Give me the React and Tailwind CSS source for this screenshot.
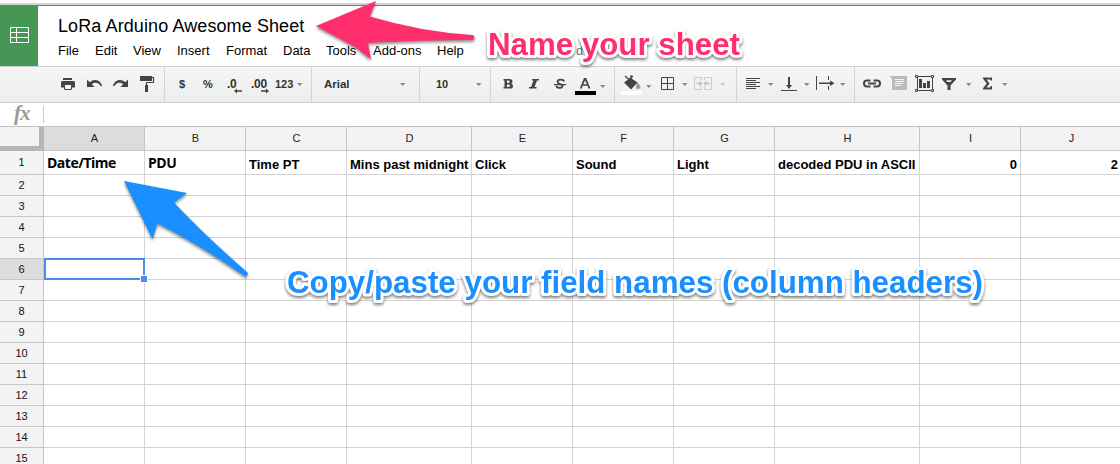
const COLS = [
  ["A", "w-[101px]", "Date/Time"],
  ["B", "w-[101px]", "PDU"],
  ["C", "w-[101px]", "Time PT"],
  ["D", "w-[125px]", "Mins past midnight"],
  ["E", "w-[101px]", "Click"],
  ["F", "w-[101px]", "Sound"],
  ["G", "w-[101px]", "Light"],
  ["H", "w-[145px]", "decoded PDU in ASCII"],
  ["I", "w-[101px]", "0"],
  ["J", "w-[101px]", "2"],
];
const ROWS = Array.from({ length: 15 }, (_, i) => i + 1);
const MENUS = [
  ["File", "w-[37px]"], ["Edit", "w-[38px]"], ["View", "w-[44px]"], ["Insert", "w-[49px]"],
  ["Format", "w-[57px]"], ["Data", "w-[43px]"], ["Tools", "w-[47px]"], ["Add-ons", "w-[64px]"], ["Help", "w-[50px]"],
];
const INK = "#444";

// Icons share the window's coordinates; each one shows the slice of the toolbar from x to x + w.
function Icon({ x, w, children }) {
  return (
    <svg className="block shrink-0" width={w} height="35" viewBox={`${x} 67 ${w} 35`} fill={INK}>
      {children}
    </svg>
  );
}

function Caret({ x, y = 83, fill = "#888" }) {
  return <path d={`M${x} ${y}h5.500l-2.750 3z`} fill={fill} />;
}

function Group({ className, children }) {
  return (
    <div className={`flex h-full shrink-0 items-center border-r border-[#d5d5d5] text-[12px] leading-[35px] font-bold text-[#333] ${className}`}>
      {children}
    </div>
  );
}

function Toolbar() {
  return (
    <div className="flex h-[37px] shrink-0 overflow-hidden border-y border-[#d0d0d0] bg-linear-to-b from-[#f6f6f6] to-[#ededed]">
      <Group className="w-[165px]">
        <Icon x={0} w={164}>
          <path d="M63 78h9v2h-9zM62.500 81h11q1.500 0 1.500 1.500v5h-3v-2h-8v2h-3v-5q0-1.500 1.500-1.500z" />
          <path d="M64.500 84.500h7v5h-7z" fill="#f6f6f6" stroke={INK} />
          <path d="M87 79.500v7.500h7.500l-2.700-2.700c4-2.700 7-1.500 9 2l1.400-.8c-2.700-6-8.200-7-12.500-3.300z" />
          <path d="M128 79.500v7.500h-7.500l2.700-2.700c-4-2.700-7-1.500-9 2l-1.400-.8c2.700-6 8.200-7 12.500-3.300z" />
          <path d="M140 76h12v5h-12z" />
          <path d="M152 77.500h1.500v5h-7v3" fill="none" stroke={INK} strokeWidth="1.200" />
          <path d="M145 85h3v7h-3z" />
        </Icon>
      </Group>
      <Group className="w-[147px]">
        <span className="w-[24px] pl-[14px] text-[11px]">$</span>
        <span className="w-[26px] pl-[14px] text-[11px]">%</span>
        <span className="w-[25px] pl-[12px] text-[12px] tracking-[-0.3px]">.0</span>
        <span className="w-[35px] pl-[11px] text-[12px] tracking-[-0.3px]">.00</span>
        <span className="w-[21px] text-[11px]">123</span>
        <Icon x={296} w={14}><Caret x={297} /></Icon>
        <span className="-ml-[145px] w-[130px]">
          <Icon x={165} w={130}>
            <path d="M234 91l3-2.500v1.700h5v1.600h-5v1.700zM269 91l-3-2.500v1.700h-5v1.600h5v1.700z" />
          </Icon>
        </span>
      </Group>
      <Group className="w-[108px]">
        <span className="w-[86px] pl-[12px] text-[11.500px]">Arial</span>
        <Icon x={398} w={20}><Caret x={400} /></Icon>
      </Group>
      <Group className="w-[71px]">
        <span className="w-[54px] pl-[16px] text-[11px]">10</span>
        <Icon x={474} w={16}><Caret x={476} /></Icon>
      </Group>
      <Group className="w-[124px]">
        <Icon x={491} w={123}>
          <path fillRule="evenodd" d="M503.500 79h6q3 0 3 2.500 0 1.300-1.300 2 1.800.6 1.800 2.400 0 2.600-3 2.600h-6.500v-1.500h1v-6.500h-1zM507 80.500v2.400h1.400q1.200 0 1.200-1.200t-1.200-1.200zM507 84.500v2.600h1.600q1.400 0 1.400-1.300t-1.400-1.300z" />
          <path d="M532 79h7v1.400h-2l-2.500 6.700h2v1.400h-7.500v-1.400h2l2.500-6.700h-1.500z" />
          <path d="M554 84h12v1.200h-12z" />
          <path d="M564 81.500c0-2.500-6.500-2.500-6.500.3 0 2.800 5.500 2 5 4.600-.4 2.300-6 1.900-6-.7" fill="none" stroke={INK} strokeWidth="1.800" />
          <path fillRule="evenodd" d="M584 78h2.200l4.200 10.500h-1.900l-1-2.700h-4.800l-1 2.700h-1.900zM585.100 80.300l-1.800 4h3.600z" />
          <path d="M575 91h21v4h-21z" fill="#000" />
          <Caret x={600} y={85} />
        </Icon>
      </Group>
      <Group className="w-[122px]">
        <Icon x={615} w={121}>
          <path d="M624 82.500l7-4.500 6.500 4.500-6.500 7z" />
          <path d="M625 76l8 7M633 76l-7 6M631 75v5" fill="none" stroke={INK} strokeWidth="1.300" />
          <path d="M637.500 82.500q6 6 .5 6.500-4-.5-.5-6.500z" fill="#999" />
          <path d="M621 91h21v4h-21z" fill="#fff" />
          <Caret x={646} y={85} />
          <path d="M661.500 77.500h12v12h-12zM667.500 77.500v12M661.500 83.500h12" fill="none" stroke={INK} />
          <Caret x={682} />
          <g fill="none" stroke="#ccc">
            <path d="M701.500 80v-2.500h-7v3M694.500 87v2.500h7v-3M704.500 80v-2.500h7v3M711.500 87v2.500h-7v-3M694.500 80v7M711.500 80v7" />
            <path d="M696 83.500h5.500M699.500 81.500l2 2-2 2M710 83.500h-5.500M706.500 81.500l-2 2 2 2" stroke="#bbb" strokeWidth="1.200" />
          </g>
          <Caret x={720} fill="#ccc" />
        </Icon>
      </Group>
      <Group className="w-[118px]">
        <Icon x={737} w={117}>
          <path d="M746 78.500h14M746 80.500h10M746 82.500h14M746 84.500h10M746 86.500h14M746 88.500h10" stroke={INK} />
          <Caret x={768} />
          <path d="M788 77h2v8h2l-3 4-3-4h2zM781 90h16v1h-16z" />
          <Caret x={804} />
          <path d="M816 76h1v14h-1zM828 76h1v4h-1zM828 86h1v4h-1zM819 82.500h11v-2l4.500 2.700-4.500 2.700v-2h-11z" />
          <Caret x={840} />
        </Icon>
      </Group>
      <Icon x={855} w={200}>
        <path d="M870.500 80.500h-3.500q-3 0-3 3t3 3h3.500M873.500 80.500h3.500q3 0 3 3t-3 3h-3.500M868 83.500h8" fill="none" stroke={INK} strokeWidth="2" />
        <path d="M889.500 76H907v14h-15V79z" fill="#bbb" />
        <path d="M895 79.500h9M895 81.500h9M895 83.500h8M895 85.500h6" stroke="#f4f4f4" />
        <path d="M917.500 76.500h15v14h-15z" fill="none" stroke={INK} />
        <path d="M919 79h3v9h-3zM923 83h3v5h-3zM927 81h3v7h-3z" />
        <path d="M915.500 75.500h2v2h-2zM931.500 75.500h2v2h-2zM915.500 89.500h2v2h-2zM931.500 89.500h2v2h-2z" fill="#f4f4f4" stroke={INK} />
        <path fillRule="evenodd" d="M942 78h14v1.500l-5.500 6V90h-3v-4.500l-5.500-6zM946 80.200l1.500 1.800h3l1.500-1.800z" />
        <Caret x={966} />
        <path d="M983 77.500h9v3h-1.500l-.5-1h-3.500l3 4-3 4h3.500l.8-1.500h1.200v3.500h-9v-1.300l3.800-4.700-3.800-4.700z" />
        <Caret x={1002} />
      </Icon>
    </div>
  );
}

function Grid() {
  return (
    <div className="flex min-h-0 flex-1 flex-col overflow-hidden">
      <div className="flex h-[24px] shrink-0">
        <div className="w-[44px] shrink-0 border-r-[5px] border-b-[5px] border-[#b7b7b7] bg-[#f3f3f3]" />
        {COLS.map(([letter, w]) => (
          <div key={letter} className={`${w} shrink-0 border-r border-b border-[#c6c6c6] pl-px text-center text-[11px] leading-[23px] text-[#222] ${letter === "A" ? "bg-[#dcdcdc]" : "bg-[#f3f3f3]"}`}>
            {letter}
          </div>
        ))}
      </div>
      {ROWS.map((n) => (
        <div key={n} className={`flex shrink-0 ${n === 1 ? "h-[24px]" : "h-[21px]"}`}>
          <div className={`flex w-[44px] shrink-0 items-center justify-center border-r border-b border-[#c6c6c6] text-[11px] text-[#111] ${n === 6 ? "bg-[#dcdcdc]" : "bg-[#f3f3f3]"}`}>
            {n}
          </div>
          {COLS.map(([letter, w, text], i) => (
            <div key={letter} className={`${w} relative shrink-0 border-r border-b border-[#d3d3d3] px-[3px] font-bold whitespace-nowrap text-black ${i > 7 ? "text-right" : ""} ${i < 2 ? "font-['Open_Sans',sans-serif] text-[14px] leading-[24px] tracking-[-0.5px]" : "text-[13px] leading-[27px]"}`}>
              {n === 1 && text}
              {n === 6 && i === 0 && (
                <div className="absolute -top-px left-0 z-10 h-[22px] w-[101px] border-2 border-[#4a8bf0]">
                  <div className="absolute -right-[5px] -bottom-[5px] size-[8px] border border-white bg-[#4a8bf0]" />
                </div>
              )}
            </div>
          ))}
        </div>
      ))}
    </div>
  );
}

function Callout({ x, y, size, length, fill, children }) {
  return (
    <text x={x} y={y} fontSize={size} textLength={length} lengthAdjust="spacingAndGlyphs" fill={fill} stroke="#fff" strokeWidth="6" strokeLinejoin="round" paintOrder="stroke" className="font-bold">
      {children}
    </text>
  );
}

export default function App() {
  return (
    <div className="relative flex h-[464px] w-[1120px] flex-col overflow-hidden bg-white font-['Liberation_Sans',Arial,sans-serif]">
      <div className="mt-[3px] h-[3px] shrink-0 border-b border-[#777] bg-[#d5d5d5]" />
      <header className="flex h-[60px] shrink-0">
        <div className="flex w-[38px] items-center justify-center bg-[#469655]">
          <svg width="19" height="16" className="mt-[-2px]" fill="none" stroke="#fff">
            <path d="M.5.5h18v15H.5zM.5 5.500h18M.5 10.500h18M6.500.5v15" />
          </svg>
        </div>
        <div className="pt-[9px] pl-[20px]">
          <h1 className="h-[22px] text-[18px] leading-[22px] tracking-[0.1px] whitespace-nowrap text-black">LoRa Arduino Awesome Sheet</h1>
          <nav className="mt-[4px] flex text-[13px] leading-[20px] text-black">
            {MENUS.map(([name, w]) => <span key={name} className={`${w} whitespace-nowrap`}>{name}</span>)}
            <span className="my-[4px] w-[5px] bg-[#f9edbe]" />
            <span className="w-[38px] pl-[84px] text-[#777]">d</span>
            <span className="pl-[30px] text-[#777]">g</span>
          </nav>
        </div>
      </header>
      <Toolbar />
      <div className="flex h-[24px] shrink-0 items-center border-b border-[#c0c0c0]">
        <div className="-mt-[4px] w-[43px] pl-[14px] font-['Liberation_Serif',serif] text-[21px] leading-[20px] font-bold tracking-[-1px] text-[#999] italic">fx</div>
        <div className="h-[17px] w-px bg-[#ccc]" />
      </div>
      <Grid />
      <svg className="absolute inset-0" width="1120" height="464">
        <g className="drop-shadow-[0_2px_1.5px_rgba(0,0,0,0.45)]">
          <path d="M316 26L376 1l-6 15.500q50 15 102 18.500a2.300 2.300 0 0 1 0 5q-55 0-104 3l3 16.500-15-12z" fill="#ff2f6d" />
          <path d="M124 181l63 12-13 9.500q30 32 73.500 70a2.500 2.500 0 0 1-3 3.500Q200 245 157.500 223.500L152.500 239z" fill="#1a8fff" />
        </g>
        <g className="drop-shadow-[0_2px_1.5px_rgba(0,0,0,0.5)]">
          <Callout x="488" y="55" size="31" length="252" fill="#ff2f6d">Name your sheet</Callout>
          <Callout x="287" y="293" size="31" length="696" fill="#1a8fff">Copy/paste your field names (column headers)</Callout>
        </g>
      </svg>
    </div>
  );
}
